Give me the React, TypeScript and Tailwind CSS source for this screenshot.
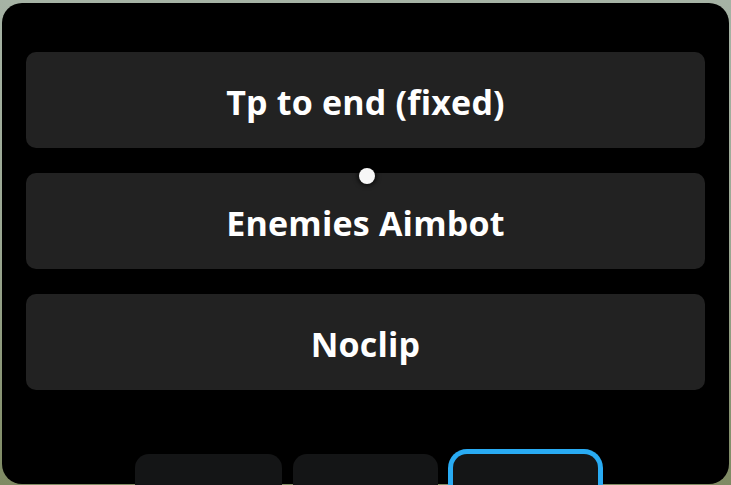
const actions = ["Tp to end (fixed)", "Enemies Aimbot", "Noclip"];

export default function App() {
    return (
        <div className="relative w-[731px] h-[485px] overflow-hidden bg-gradient-to-b from-[#a6b3a5] via-[#9aa792] to-[#7f8a63]">
            <div className="mt-[3px] mx-[2px] h-[481px] rounded-[20px] bg-black flex flex-col px-[24px] pt-[49px]">
                <div className="flex flex-col gap-[25px]">
                    {actions.map((label) => (
                        <button
                            key={label}
                            className="h-[96px] rounded-[10px] bg-[#222222] flex items-center justify-center pt-[4px] text-white font-bold text-[34px] tracking-[0.2px] font-['Open_Sans',sans-serif]"
                        >
                            {label}
                        </button>
                    ))}
                </div>

                {/* bottom tabs */}
                <div className="mt-[64px] flex justify-center gap-[11px] pl-[1px]">
                    <div className="w-[147px] h-[60px] shrink-0 rounded-[14px] bg-[#141516]" />
                    <div className="w-[145px] h-[60px] shrink-0 rounded-[14px] bg-[#141516]" />
                    <div className="ml-[4px] w-[145px] h-[60px] shrink-0 rounded-[14px] bg-[#141516] ring-[5px] ring-[#29abf3]" />
                </div>
            </div>

            {/* drag handle dot */}
            <div className="absolute left-[359px] top-[168px] w-[16px] h-[16px] rounded-full bg-[#f7f7f7] shadow-[0_0_4px_2px_rgba(0,0,0,0.6)]" />
        </div>
    );
}
